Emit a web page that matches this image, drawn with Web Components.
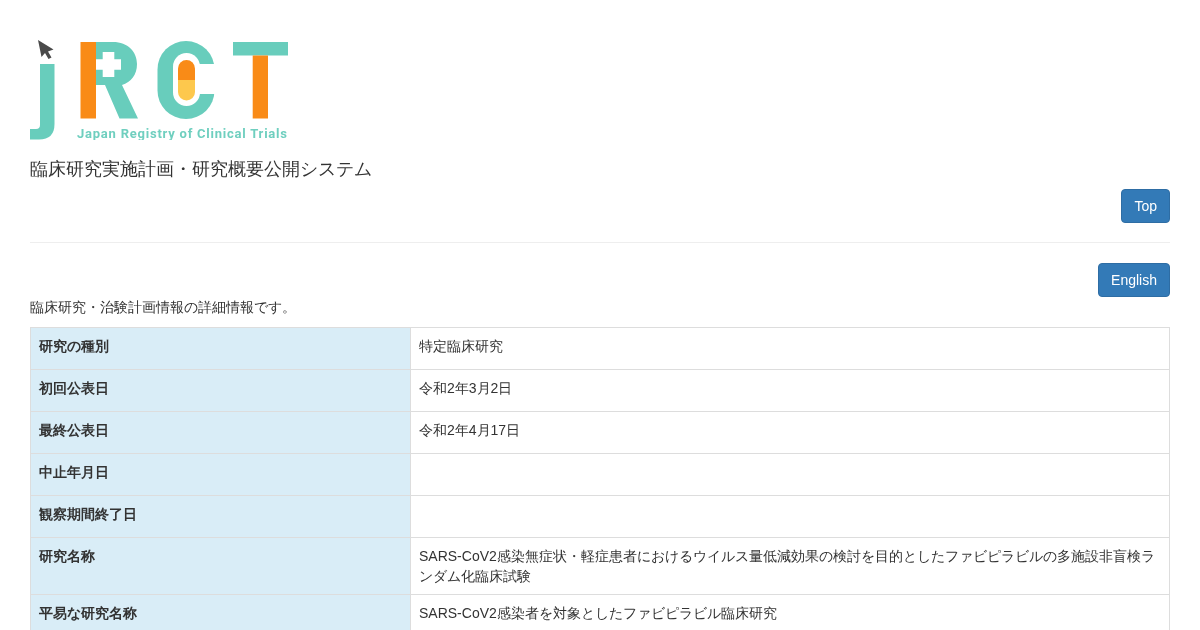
<!DOCTYPE html>
<html lang="ja">
<head>
<meta charset="utf-8">
<title>jRCT</title>
<style>
html,body{margin:0;padding:0;background:#fff;overflow:hidden;height:630px}
body{font:14px/20px "Liberation Sans",sans-serif;color:#333}
</style>
</head>
<body>
<template id="t-page">
<style>
:host{display:block;padding:40px 30px 0;will-change:transform}
hr{border:0;border-top:1px solid #eee;margin:19px 0 20px}
.r{display:flex;justify-content:flex-end}
.title{font-size:18px;line-height:20px;margin:19px 0 10px;font-weight:400}
p{margin:0 0 10px}
</style>
<jr-logo></jr-logo>
<div class="title">臨床研究実施計画・研究概要公開システム</div>
<div class="r"><jr-btn>Top</jr-btn></div>
<hr>
<div class="r"><jr-btn>English</jr-btn></div>
<p>臨床研究・治験計画情報の詳細情報です。</p>
<jr-table>
<jr-row label="研究の種別">特定臨床研究</jr-row>
<jr-row label="初回公表日">令和2年3月2日</jr-row>
<jr-row label="最終公表日">令和2年4月17日</jr-row>
<jr-row label="中止年月日"></jr-row>
<jr-row label="観察期間終了日"></jr-row>
<jr-row label="研究名称">SARS-CoV2感染無症状・軽症患者におけるウイルス量低減効果の検討を目的としたファビピラビルの多施設非盲検ランダム化臨床試験</jr-row>
<jr-row label="平易な研究名称">SARS-CoV2感染者を対象としたファビピラビル臨床研究</jr-row>
</jr-table>
</template>
<template id="t-logo">
<style>
:host{display:block;height:100px}
svg{display:block}
text{font-family:Roboto,"Liberation Sans",sans-serif;font-weight:700;font-size:13px;fill:#6fcfbf}
</style>
<svg width="260" height="100" viewBox="30 40 260 100" xmlns="http://www.w3.org/2000/svg">
<path fill="#4a4a4a" d="M38 40 L53.5 49.5 L48 51.5 L51.5 57.5 L48.5 59 L45 53 L41.5 57 Z"/>
<path fill="#68cdbc" d="M40 64 H54.5 V124 Q54.5 139.5 39 139.5 H30 V129 H36 Q40 129 40 125 Z"/>
<rect x="80.5" y="42" width="15.5" height="76.5" fill="#f98b17"/>
<path fill="#68cdbc" d="M96 42 H113 C128 42 137 52 137 64 C137 75 131 82 122 85 L138 118.5 H119.5 L105 85 H96 Z"/>
<path fill="#fff" d="M102.7 52 H114.3 V59.3 H121 V69.7 H114.3 V77 H102.7 V69.7 H96 V59.3 H102.7 Z"/>
<rect x="157.5" y="41" width="57" height="78" rx="28.5" fill="#68cdbc"/>
<rect x="173" y="53" width="27" height="53" rx="13.5" fill="#fff"/>
<rect x="190" y="64" width="26" height="30" fill="#fff"/>
<path fill="#f98b17" d="M178 80 V68.5 A8.5 8.5 0 0 1 195 68.5 V80 Z"/>
<path fill="#fdc84d" d="M178 80 H195 V92 A8.5 8.5 0 0 1 178 92 Z"/>
<rect x="233" y="42" width="55" height="13.5" fill="#68cdbc"/>
<rect x="252.7" y="55.5" width="15.3" height="63" fill="#f98b17"/>
<text x="77" y="137.5" textLength="210" lengthAdjust="spacing">Japan Registry of Clinical Trials</text>
</svg>
</template>
<template id="t-btn">
<style>
:host{display:inline-block;box-sizing:border-box;height:34px;padding:6px 12px;background:#337ab7;border:1px solid #2e6da4;border-radius:4px;color:#fff;font-size:14px;line-height:20px}
</style>
<slot></slot>
</template>
<template id="t-table">
<style>
:host{display:block;border:solid #ddd;border-width:0 1px 1px}
</style>
<slot></slot>
</template>
<template id="t-row">
<style>
:host{display:grid;grid-template-columns:380px 1fr;border-top:1px solid #ddd;min-height:41px}
.l{background:#d9edf7;font-weight:700;padding:8px;border-right:1px solid #ddd;box-sizing:border-box}
.v{padding:8px}
</style>
<div class="l"></div>
<div class="v"><slot></slot></div>
</template>
<jr-page></jr-page>
<script>
function def(name,tpl,init){
  customElements.define(name,class extends HTMLElement{
    constructor(){
      super();
      this.attachShadow({mode:'open'}).appendChild(document.getElementById(tpl).content.cloneNode(true));
    }
    connectedCallback(){ if(init) init(this); }
  });
}
def('jr-logo','t-logo');
def('jr-btn','t-btn');
def('jr-table','t-table');
def('jr-row','t-row',function(el){ el.shadowRoot.querySelector('.l').textContent=el.getAttribute('label'); });
def('jr-page','t-page');
</script>
</body>
</html>
